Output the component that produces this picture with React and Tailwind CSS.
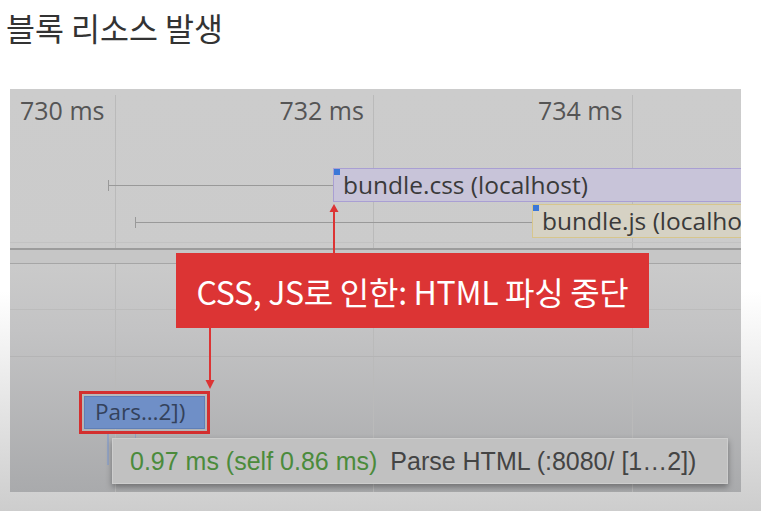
export default function App() {
  const kr = { fontFamily: '"Noto Sans CJK KR", "Noto Sans", sans-serif' };
  return (
    <div className="w-[761px] h-[511px] overflow-hidden bg-[linear-gradient(to_bottom,#ffffff_0%,#ffffff_57%,#cdcdcd_100%)]">
      <div
        className="h-[89px] pl-[6px] pt-[7px] text-[31.5px] leading-[40px] text-[#333333]"
        style={kr}
      >
        블록 리소스 발생
      </div>
      <div
        className="relative ml-[10px] w-[731px] h-[403px] overflow-hidden bg-[linear-gradient(to_bottom,#cccccc_0%,#cbcbcb_42%,#c3c3c4_60%,#a9aaac_100%)] font-['Open_Sans',sans-serif]"
      >
        {/* vertical grid lines */}
        <div className="absolute left-[105px] top-[6px] bottom-0 w-px bg-[#bababa]" />
        <div className="absolute left-[363px] top-[6px] bottom-0 w-px bg-[#bababa]" />
        <div className="absolute left-[622px] top-[6px] bottom-0 w-px bg-[#bababa]" />

        {/* tick labels */}
        <div className="flex h-[36px] pt-[6px] text-[25px] leading-[30px] text-[#555555]">
          <span className="pl-[10px]">730 ms</span>
          <span className="ml-[175px]">732 ms</span>
          <span className="ml-[174px]">734 ms</span>
        </div>

        {/* horizontal lines */}
        <div className="absolute left-0 right-0 top-[153px] h-px bg-[#c2c2c2]" />
        <div className="absolute left-0 right-0 top-[159px] h-[2px] bg-[#9c9c9c]" />
        <div className="absolute left-0 right-0 top-[161px] h-[13px] bg-[#c6c6c6]" />
        <div className="absolute left-0 right-0 top-[174px] h-px bg-[#a6a6a6]" />
        <div className="absolute left-0 right-0 top-[220px] h-px bg-[#bcbcbc]" />
        <div className="absolute left-0 right-0 top-[267px] h-px bg-[#b4b4b5]" />

        {/* css whisker */}
        <div className="absolute left-[98px] top-[96px] w-[225px] h-px bg-[#999999]" />
        <div className="absolute left-[98px] top-[91px] w-px h-[11px] bg-[#999999]" />
        {/* css bar */}
        <div className="absolute left-[323px] top-[79px] w-[420px] h-[34px] border border-[#a99fd3] bg-[#c8c4d9] pl-[9px] text-[24.5px] leading-[31px] text-[#3a3a3a] whitespace-nowrap">
          bundle.css (localhost)
          <div className="absolute left-0 top-0 w-[6px] h-[6px] bg-[#3c78d8]" />
        </div>

        {/* js whisker */}
        <div className="absolute left-[125px] top-[133px] w-[397px] h-px bg-[#999999]" />
        <div className="absolute left-[125px] top-[128px] w-px h-[11px] bg-[#999999]" />
        {/* js bar (cut off by the panel edge, as in the capture) */}
        <div className="absolute left-[522px] top-[115px] w-[240px] h-[34px] border border-[#d7c68c] bg-[#d6d2c4] pl-[9px] text-[24.5px] leading-[31px] text-[#3a3a3a] whitespace-nowrap overflow-hidden">
          bundle.js (localho
          <div className="absolute left-0 top-0 w-[6px] h-[6px] bg-[#3c78d8]" />
        </div>

        {/* thin blue lines below Pars */}
        <div className="absolute left-[97px] top-[345px] w-[2px] h-[31px] bg-[#93a3c2]" />
        <div className="absolute left-[125px] top-[345px] w-px h-[8px] bg-[#93a3c2]" />

        {/* Pars box */}
        <div className="absolute left-[69px] top-[302px] w-[131px] h-[43px] border-[3px] border-[#d32f2f] p-[2px]">
          <div className="h-full bg-[#6f8fc7] border border-[#5f7fb8] pl-[10px] text-[22.5px] leading-[30px] text-[#34425c] whitespace-nowrap">
            Pars…2])
          </div>
        </div>

        {/* tooltip */}
        <div className="absolute left-[102px] top-[349px] w-[616px] h-[46px] bg-[#c1c1c1] border border-[#cdcdcd] shadow-[0_3px_6px_rgba(0,0,0,0.35)] pl-[17px] text-[25px] leading-[44px] whitespace-nowrap font-['Liberation_Sans',sans-serif] flex">
          <span className="text-[#4b8b3b]">0.97 ms (self 0.86 ms)</span>
          <span className="ml-[13px] text-[#444444]">Parse HTML (:8080/ [1…2])</span>
        </div>

        {/* red callout */}
        <div
          className="absolute left-[166px] top-[164px] w-[473px] h-[75px] bg-[#dc3434] flex items-center justify-center text-white text-[32px] tracking-[-0.3px] whitespace-nowrap"
          style={kr}
        >
          CSS, JS로 인한: HTML 파싱 중단
        </div>

        {/* arrow up */}
        <svg className="absolute left-[318px] top-[114px]" width="12" height="52" viewBox="0 0 12 52">
          <line x1="6" y1="8" x2="6" y2="52" stroke="#dc3434" strokeWidth="2" />
          <polygon points="6,1 1.5,9 10.5,9" fill="#dc3434" />
        </svg>
        {/* arrow down */}
        <svg className="absolute left-[194px] top-[238px]" width="12" height="63" viewBox="0 0 12 63">
          <line x1="6" y1="0" x2="6" y2="54" stroke="#dc3434" strokeWidth="2" />
          <polygon points="6,62 1.5,53 10.5,53" fill="#dc3434" />
        </svg>
      </div>
    </div>
  );
}
